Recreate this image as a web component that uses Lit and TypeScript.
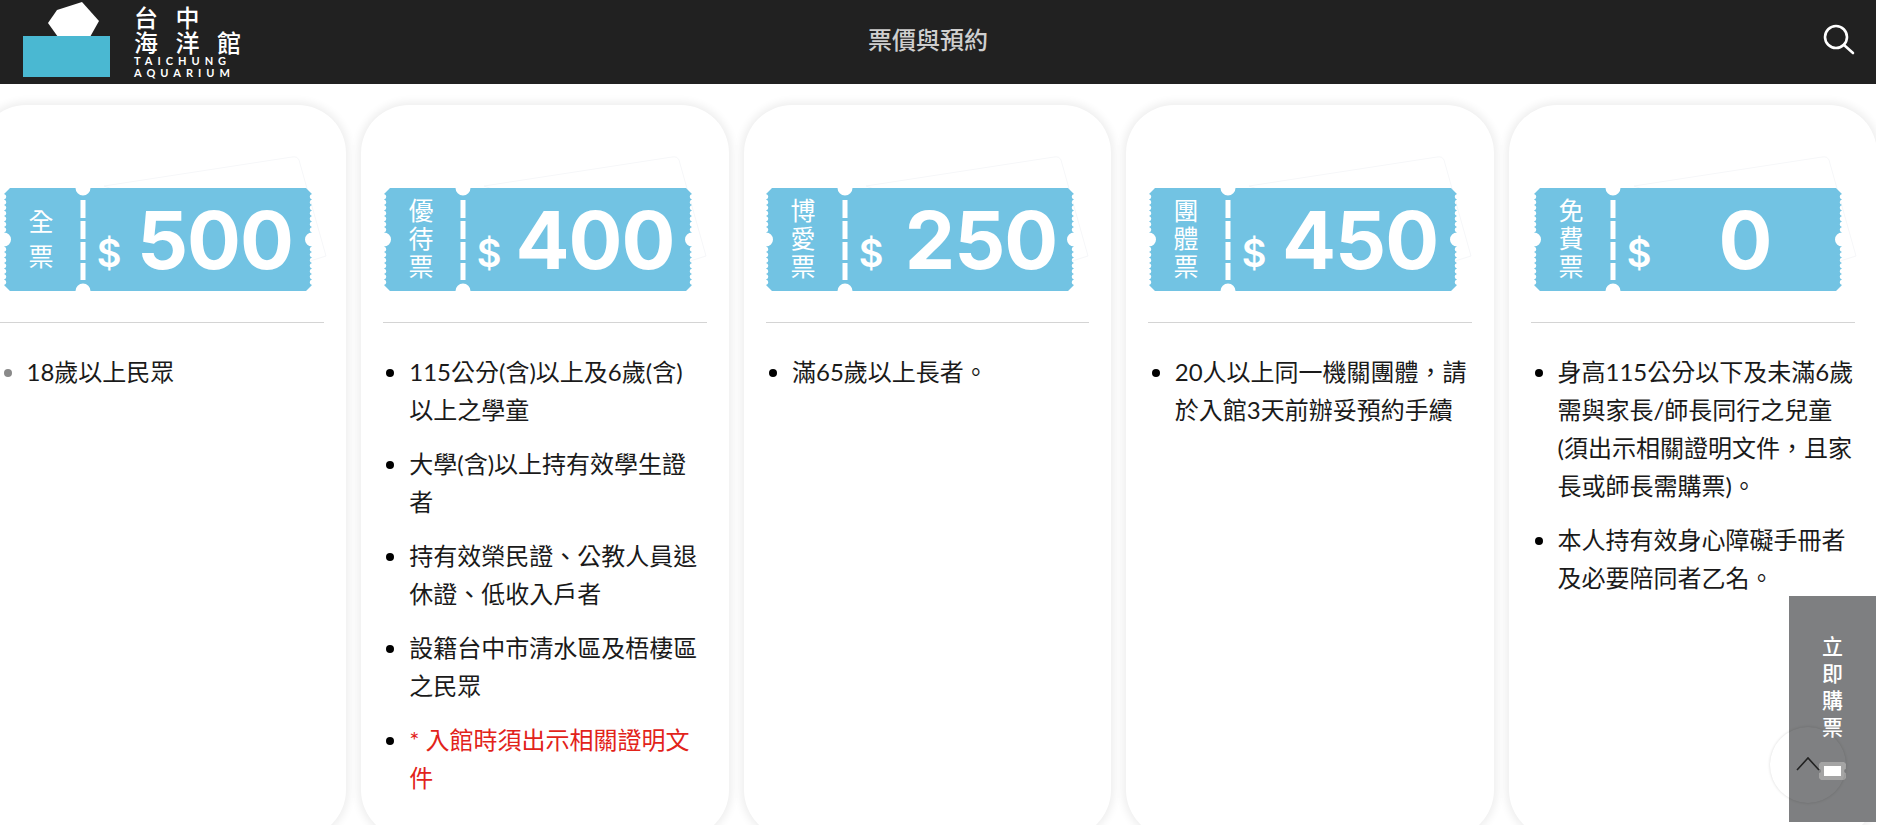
import { LitElement, html, css, svg } from "lit";
import { customElement } from "lit/decorators.js";

interface Item { t: string; red?: boolean }
interface Ticket { label: string[]; price: string; nudge: number; dx: number; bullet?: string; items: Item[] }

const TICKETS: Ticket[] = [
  { label: ["全", "票"], price: "500", nudge: 4, dx: 0, bullet: "#8a8a8a", items: [{ t: "18歲以上民眾" }] },
  {
    label: ["優", "待", "票"], price: "400", nudge: 1, dx: 0,
    items: [
      { t: "115公分(含)以上及6歲(含)以上之學童" },
      { t: "大學(含)以上持有效學生證者" },
      { t: "持有效榮民證、公教人員退休證、低收入戶者" },
      { t: "設籍台中市清水區及梧棲區之民眾" },
      { t: "* 入館時須出示相關證明文件", red: true },
    ],
  },
  { label: ["博", "愛", "票"], price: "250", nudge: 0, dx: 4, items: [{ t: "滿65歲以上長者。" }] },
  { label: ["團", "體", "票"], price: "450", nudge: 1, dx: 0, items: [{ t: "20人以上同一機關團體，請於入館3天前辦妥預約手續" }] },
  {
    label: ["免", "費", "票"], price: "0", nudge: 3, dx: 0,
    items: [
      { t: "身高115公分以下及未滿6歲需與家長/師長同行之兒童(須出示相關證明文件，且家長或師長需購票)。" },
      { t: "本人持有效身心障礙手冊者及必要陪同者乙名。" },
    ],
  },
];

function scallops(x: number, y0: number, y1: number, sweep: number): string {
  const step = 5.2;
  const n = Math.round(Math.abs(y1 - y0) / step);
  const d = (y1 - y0) / n;
  let out = "";
  for (let i = 1; i <= n; i++) out += `A2.8 2.8 0 0 ${sweep} ${x} ${(y0 + d * i).toFixed(1)} `;
  return out;
}

function ticketPath(): string {
  const W = 308, H = 103, c = 6, nx = 79, nr = 7.5, er = 7;
  return [
    `M${c} 0 L${nx - nr} 0 A${nr} ${nr} 0 0 0 ${nx + nr} 0 L${W - c} 0 L${W} ${c}`,
    scallops(W, c, H / 2 - er, 0),
    `A${er} ${er} 0 0 0 ${W} ${H / 2 + er}`,
    scallops(W, H / 2 + er, H - c, 0),
    `L${W - c} ${H} L${nx + nr} ${H} A${nr} ${nr} 0 0 0 ${nx - nr} ${H} L${c} ${H} L0 ${H - c}`,
    scallops(0, H - c, H / 2 + er, 0),
    `A${er} ${er} 0 0 0 0 ${H / 2 - er}`,
    scallops(0, H / 2 - er, c, 0),
    "Z",
  ].join(" ");
}
const PATH = ticketPath();

@customElement("ticket-art")
class TicketArt extends LitElement {
  static properties = { label: { attribute: false }, price: {}, dx: { type: Number } };
  label: string[] = [];
  price = "";
  dx = 0;
  static styles = css`
    :host { display: block; width: 308px; height: 103px; }
    svg { display: block; overflow: visible; }
    .back { fill: #fff; stroke: #f6f7f9; stroke-width: 1; }
    .body { fill: #72c3e3; }
    .dash { stroke: #fff; stroke-width: 5; stroke-dasharray: 18 3; }
    .stub { fill: #fff; font: 400 25px "Noto Sans CJK TC", sans-serif; text-anchor: middle; }
    .cur { fill: #fff; font: 600 38px "Inter", sans-serif; text-anchor: middle; }
    .num { fill: #fff; font: 700 80px "Inter", sans-serif; text-anchor: middle; letter-spacing: -1px; }
  `;
  render() {
    const pitch = this.label.length === 3 ? 28 : 35;
    const y0 = 60 - ((this.label.length - 1) * pitch) / 2;
    return html`<svg width="308" height="103" viewBox="0 0 308 103">
      <path class="back" d="M100 -2 L288 -31 Q293 -32 295 -28 L322 68 L306 73 Z"></path>
      <path class="body" d=${PATH}></path>
      <line class="dash" x1="79" y1="12" x2="79" y2="92"></line>
      ${this.label.map((c, i) => svg`<text class="stub" x="37" y=${y0 + i * pitch}>${c}</text>`)}
      <text class="cur" x="105" y="79">$</text>
      <text class="num" x=${211 + this.dx} y="81">${this.price}</text>
    </svg>`;
  }
}

@customElement("app-root")
export class AppRoot extends LitElement {
  static styles = css`
    :host {
      display: block; position: relative; width: 1881px; height: 825px; overflow: hidden;
      background: #fff; font-family: "Lato", "Noto Sans CJK TC", sans-serif; color: #1a1a1a;
    }
    .bar {
      width: 1876px; height: 84px; background: #212121; display: grid;
      grid-template-columns: 1fr auto 1fr; align-items: center; box-sizing: border-box;
      padding: 0 23px;
    }
    .logo { display: flex; align-items: flex-start; height: 84px; gap: 24px; }
    .logo svg { display: block; flex: none; }
    .logo-text { color: #fff; padding-top: 4px; white-space: nowrap; }
    .zh { font: 500 24px/25px "Noto Sans CJK TC", sans-serif; letter-spacing: 17.5px; }
    .en { font: 700 11px/12px "Lato", sans-serif; letter-spacing: 5px; }
    .zh + .en { margin-top: 1px; }
    .title { color: #cfcfcf; font: 500 24px/1 "Noto Sans CJK TC", sans-serif; margin: 0 20px 7px 0; }
    .search { justify-self: end; display: block; margin: 0 -2px 4px 0; }
    .track-wrap { width: 1876px; height: 741px; overflow: hidden; }
    .track { display: flex; gap: 15px; margin-left: -22px; padding-top: 21px; width: 1898px; }
    .card {
      flex: none; width: 367.75px; height: 733px; box-sizing: border-box; background: #fff;
      border-radius: 48px; box-shadow: 0 0 8px 3px rgba(0, 0, 0, 0.07); padding: 83px 22px 0;
    }
    .rule { border: 0; border-top: 1px solid #d4d4d4; margin: 31px 0 0; }
    ul { margin: 30px 0 0; padding: 0 0 0 26.5px; font-size: 24px; line-height: 38px; color: #000; }
    li { margin-bottom: 16px; }
    .txt { color: #1a1a1a; }
    .red { color: #e2231a; }
    .buy {
      position: absolute; left: 1789px; top: 596px; width: 87px; height: 226px; box-sizing: border-box;
      background: #7e7f81; color: #fff; display: flex; flex-direction: column; align-items: center;
      padding-top: 36px; gap: 22px;
    }
    .buy-text { font: 500 21px/27px "Noto Sans CJK TC", sans-serif; width: 21px; text-align: center; }
    .up {
      position: absolute; left: 1770px; top: 727px; width: 76px; height: 76px; box-sizing: border-box;
      border-radius: 50%; background: rgba(255, 255, 255, 0.01);
      box-shadow: 0 0 3px rgba(0, 0, 0, 0.16); display: block;
    }
  `;
  render() {
    return html`
      <header class="bar">
        <div class="logo">
          <svg width="87" height="78" viewBox="0 0 87 78">
            <polygon points="25,23 34,10 59,2 76,21 67,37 35,37" fill="#fff"></polygon>
            <rect x="0" y="36" width="87" height="41" fill="#4ab8d2"></rect>
          </svg>
          <div class="logo-text">
            <div class="zh">台中</div>
            <div class="zh">海洋館</div>
            <div class="en">TAICHUNG</div>
            <div class="en">AQUARIUM</div>
          </div>
        </div>
        <div class="title">票價與預約</div>
        <svg class="search" width="32" height="32" viewBox="0 0 32 32" fill="none" stroke="#fff" stroke-width="2.6">
          <circle cx="13" cy="13" r="11"></circle>
          <line x1="21" y1="21" x2="30" y2="29" stroke-linecap="round"></line>
        </svg>
      </header>
      <main class="track-wrap">
        <div class="track">
          ${TICKETS.map(
            (k) => html`<section class="card">
              <ticket-art .label=${k.label} .dx=${k.dx} price=${k.price} style="margin-left:${k.nudge}px"></ticket-art>
              <hr class="rule" />
              <ul>
                ${k.items.map(
                  (i) => html`<li style=${k.bullet ? `color:${k.bullet}` : ""}>
                    <span class=${i.red ? "red" : "txt"}>${i.t}</span>
                  </li>`
                )}
              </ul>
            </section>`
          )}
        </div>
      </main>
      <a class="buy">
        <div class="buy-text">立即購票</div>
        <svg width="27" height="18" viewBox="0 0 27 18">
          <path d="M2 0 H25 L27 2 V7 A2 2 0 0 0 27 11 V16 L25 18 H2 L0 16 V11 A2 2 0 0 0 0 7 V2 Z" fill="#a3a3a3"></path>
          <rect x="5" y="4" width="17" height="10" fill="#fff"></rect>
        </svg>
      </a>
      <svg class="up" viewBox="0 0 76 76" fill="none" stroke="#222" stroke-width="1.6">
        <polyline points="27,43 38,31 49,43"></polyline>
      </svg>
    `;
  }
}
